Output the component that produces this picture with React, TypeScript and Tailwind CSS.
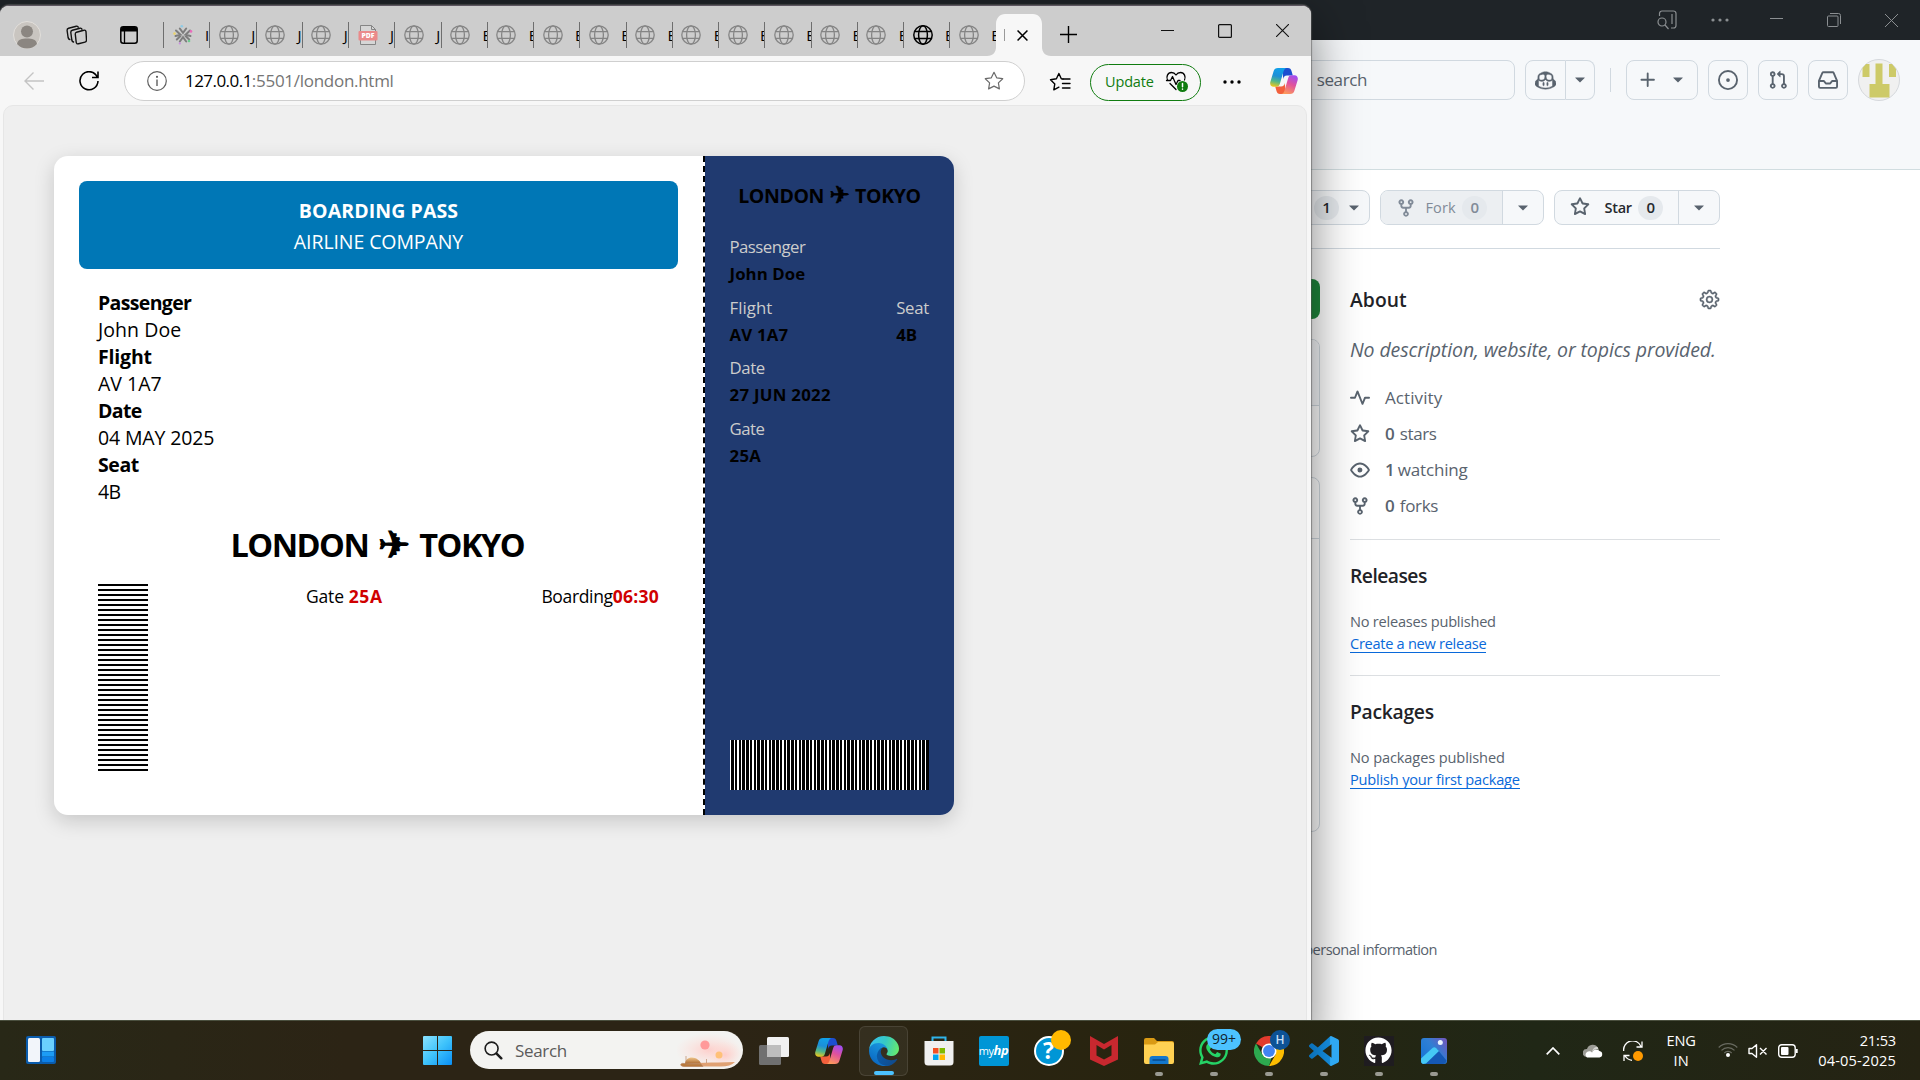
import React, { useLayoutEffect, useRef } from 'react';
import { GoCopilot, GoGear, GoTriangleDown } from 'react-icons/go';
import { FaGithub, FaWhatsapp } from 'react-icons/fa';

type Kids = { children?: React.ReactNode };

/* One line of text whose tracking is adjusted to fill a given width. */
function T({ w, className = '', children }: { w: number; className?: string; children: string }) {
  const ref = useRef<HTMLSpanElement>(null);
  useLayoutEffect(() => {
    const el = ref.current;
    if (!el) return;
    el.style.letterSpacing = '0px';
    const natural = el.getBoundingClientRect().width;
    el.style.letterSpacing = `${(w + 0.8 - natural) / children.length}px`;
  }, [w, children]);
  return <span ref={ref} className={`inline-block whitespace-pre ${className}`}>{children}</span>;
}

/* 16-unit outline icons */
const glyphs = {
  fork: 'M5 5.372v.878c0 .414.336.75.75.75h4.5a.75.75 0 0 0 .75-.75v-.878a2.25 2.25 0 1 1 1.5 0v.878a2.25 2.25 0 0 1-2.25 2.25h-1.5v2.128a2.251 2.251 0 1 1-1.5 0V8.5h-1.5A2.25 2.25 0 0 1 3.5 6.25v-.878a2.25 2.25 0 1 1 1.5 0ZM5 3.25a.75.75 0 1 0-1.5 0 .75.75 0 0 0 1.5 0Zm6.75.75a.75.75 0 1 0 0-1.5.75.75 0 0 0 0 1.5Zm-3 8.75a.75.75 0 1 0-1.5 0 .75.75 0 0 0 1.5 0Z',
  star: 'M8 .25a.75.75 0 0 1 .673.418l1.882 3.815 4.21.612a.75.75 0 0 1 .416 1.279l-3.046 2.97.719 4.192a.751.751 0 0 1-1.088.791L8 12.347l-3.766 1.98a.75.75 0 0 1-1.088-.79l.72-4.194L.818 6.374a.75.75 0 0 1 .416-1.28l4.21-.611L7.327.668A.75.75 0 0 1 8 .25Zm0 2.445L6.615 5.5a.75.75 0 0 1-.564.41l-3.097.45 2.24 2.184a.75.75 0 0 1 .216.664l-.528 3.084 2.769-1.456a.75.75 0 0 1 .698 0l2.77 1.456-.53-3.084a.75.75 0 0 1 .216-.664l2.24-2.183-3.096-.45a.75.75 0 0 1-.564-.41L8 2.694Z',
  eye: 'M8 2c1.981 0 3.671.992 4.933 2.078 1.27 1.091 2.187 2.345 2.637 3.023a1.62 1.62 0 0 1 0 1.798c-.45.678-1.367 1.932-2.637 3.023C11.67 13.008 9.981 14 8 14c-1.981 0-3.671-.992-4.933-2.078C1.797 10.83.88 9.576.43 8.898a1.62 1.62 0 0 1 0-1.798c.45-.677 1.367-1.931 2.637-3.022C4.33 2.992 6.019 2 8 2ZM1.679 7.932a.12.12 0 0 0 0 .136c.411.622 1.241 1.75 2.366 2.717C5.176 11.758 6.527 12.5 8 12.5c1.473 0 2.825-.742 3.955-1.715 1.124-.967 1.954-2.096 2.366-2.717a.12.12 0 0 0 0-.136c-.412-.621-1.242-1.75-2.366-2.717C10.824 4.242 9.473 3.5 8 3.5c-1.473 0-2.825.742-3.955 1.715-1.124.967-1.954 2.096-2.366 2.717ZM8 10a2 2 0 1 1-.001-3.999A2 2 0 0 1 8 10Z',
  pulse: 'M6 2c.306 0 .582.187.696.471L10 10.731l1.304-3.26A.751.751 0 0 1 12 7h3.25a.75.75 0 0 1 0 1.5h-2.742l-1.812 4.528a.751.751 0 0 1-1.392 0L6 4.77 4.696 8.03A.75.75 0 0 1 4 8.5H.75a.75.75 0 0 1 0-1.5h2.742l1.812-4.529A.751.751 0 0 1 6 2Z',
  issue: 'M8 9.5a1.5 1.5 0 1 0 0-3 1.5 1.5 0 0 0 0 3ZM8 0a8 8 0 1 1 0 16A8 8 0 0 1 8 0ZM1.5 8a6.5 6.5 0 1 0 13 0 6.5 6.5 0 0 0-13 0Z',
  pull: 'M1.5 3.25a2.25 2.25 0 1 1 3 2.122v5.256a2.251 2.251 0 1 1-1.5 0V5.372A2.25 2.25 0 0 1 1.5 3.25Zm5.677-.177L9.573.677A.25.25 0 0 1 10 .854V2.5h1A2.5 2.5 0 0 1 13.5 5v5.628a2.251 2.251 0 1 1-1.5 0V5a1 1 0 0 0-1-1h-1v1.646a.25.25 0 0 1-.427.177L7.177 3.427a.25.25 0 0 1 0-.354ZM3.75 2.5a.75.75 0 1 0 0 1.5.75.75 0 0 0 0-1.5Zm0 9.5a.75.75 0 1 0 0 1.5.75.75 0 0 0 0-1.5Zm8.25.75a.75.75 0 1 0 1.5 0 .75.75 0 0 0-1.5 0Z',
  inbox: 'M2.8 2.06A1.75 1.75 0 0 1 4.41 1h7.18c.7 0 1.333.417 1.61 1.06l2.74 6.395c.04.093.06.194.06.295v4.5A1.75 1.75 0 0 1 14.25 15H1.75A1.75 1.75 0 0 1 0 13.25v-4.5c0-.101.02-.202.06-.295Zm1.61.44a.25.25 0 0 0-.23.152L1.887 8H4.75a.75.75 0 0 1 .6.3L6.625 10h2.75l1.275-1.7a.75.75 0 0 1 .6-.3h2.863L11.82 2.652a.25.25 0 0 0-.23-.152Zm10.09 7h-2.875l-1.275 1.7a.75.75 0 0 1-.6.3h-3.5a.75.75 0 0 1-.6-.3L4.375 9.5H1.5v3.75c0 .138.112.25.25.25h12.5a.25.25 0 0 0 .25-.25Z',
  plus: 'M7.75 2a.75.75 0 0 1 .75.75V7h4.25a.75.75 0 0 1 0 1.5H8.5v4.25a.75.75 0 0 1-1.5 0V8.5H2.750a.75.75 0 0 1 0-1.5H7V2.750A.75.75 0 0 1 7.750 2Z',
};

function Glyph({ name, className = '' }: { name: keyof typeof glyphs; className?: string }) {
  return <svg viewBox="0 0 16 16" className={`size-5 shrink-0 ${className}`} fill="currentColor"><path d={glyphs[name]} /></svg>;
}

function Globe({ dark }: { dark?: boolean }) {
  return (
    <svg viewBox="0 0 20 20" className={`size-5 shrink-0 ${dark ? 'text-black' : 'text-[#858585]'}`} fill="none" stroke="currentColor" strokeWidth={dark ? 1.5 : 1.3}>
      <circle cx="10" cy="10" r="9.2" />
      <ellipse cx="10" cy="10" rx="4.4" ry="9.2" />
      <path d="M1.6 6.6h16.8M1.6 13.4h16.8" />
    </svg>
  );
}

function SlackLike() {
  return (
    <svg viewBox="0 0 20 20" className="size-5 shrink-0">
      <g stroke="#7d7d7d" strokeWidth="2" strokeLinecap="round" fill="none">
        <path d="M6.800 3.500L10 7.800l3.200-4.300M6.800 16.500l3.200-4.300 3.200 4.300M3 5.500l4.500 4.200L2.500 11M17 5.500l-4.500 4.200 5 1.300M3.800 14.500L7.500 11M16.200 14.500L12.500 11" />
      </g>
      <circle cx="8.8" cy="1.3" r="1.3" fill="#8ecbe6" />
      <circle cx="18" cy="6.4" r="1.3" fill="#ea6dbd" />
      <circle cx="1.5" cy="8.6" r="1.3" fill="#ead36d" />
      <circle cx="16" cy="16" r="1.3" fill="#6dc98e" />
      <circle cx="6.8" cy="18.4" r="1.1" fill="#c98ee0" />
    </svg>
  );
}

function Pdf() {
  return (
    <svg viewBox="0 0 20 20" className="size-5 shrink-0">
      <path d="M2.5.5h11l4 4v15h-15z" fill="#d6d6d6" stroke="#858585" />
      <path d="M13.500.5v4h4" fill="none" stroke="#858585" />
      <rect x="0.500" y="6" width="19" height="9.500" rx="1" fill="#ea8a8a" />
      <text x="10" y="13.300" textAnchor="middle" fontSize="6.800" fontWeight="800" fill="#fff" fontFamily="Open Sans">PDF</text>
    </svg>
  );
}

const tabs = [
  { k: 'slack', t: 'I' }, { k: 'g', t: 'J' }, { k: 'g', t: 'J' }, { k: 'g', t: 'J' }, { k: 'pdf', t: 'J' },
  { k: 'g', t: 'J' }, { k: 'g', t: 'E' }, { k: 'g', t: 'E' }, { k: 'g', t: 'E' }, { k: 'g', t: 'E' },
  { k: 'g', t: 'E' }, { k: 'g', t: 'E' }, { k: 'g', t: 'E' }, { k: 'g', t: 'E' }, { k: 'g', t: 'E' },
  { k: 'g', t: 'E' }, { k: 'dark', t: 'E' }, { k: 'g', t: 'E' },
];

function TabStrip() {
  return (
    <div className="flex h-[50px] shrink-0 bg-[#cdcdcd]">
      <svg viewBox="0 0 28 28" className="mt-[15px] ml-[13px] size-7 shrink-0">
        <circle cx="14" cy="14" r="13.500" fill="#c9c5c0" stroke="#e2dfdb" />
        <circle cx="14" cy="10.500" r="6" fill="#8b8681" />
        <path d="M4 23c1-5 5-5.500 10-5.500S23 18 24 23c-5 6-15 6-20 0z" fill="#8b8681" />
      </svg>
      <svg viewBox="0 0 22 22" className="mt-[18px] ml-[24px] size-[22px] shrink-0" fill="none" stroke="#111" strokeWidth="1.400" strokeLinejoin="round" strokeLinecap="round">
        <path d="M11.500 8.200l7.300-2c1-.3 2 .3 2.200 1.400l.5 8.500c0 1-.5 1.800-1.500 2l-6.500 1.700c-1.200.3-2.200-.4-2.300-1.500l-.9-8c-.1-1 .3-1.800 1.200-2.100z" />
        <path d="M8.500 18c-1-.3-1.500-1-1.700-2l-1-7.500c-.1-1.200.4-2 1.500-2.300l7.700-2c1-.2 1.700.1 2 1" />
        <path d="M4.800 15.500c-1-.3-1.500-1-1.700-2l-1-7c-.1-1.200.4-2 1.500-2.300l7.700-2c1-.2 1.700.1 2 1" />
      </svg>
      <svg viewBox="0 0 18 18" className="mt-5 ml-[33px] size-[18px] shrink-0">
        <rect x="0.800" y="0.800" width="16.400" height="16.400" rx="2.500" fill="none" stroke="#000" strokeWidth="1.500" />
        <path d="M1 3a2 2 0 0 1 2-2h12a2 2 0 0 1 2 2v2.500H1z" fill="#000" />
        <path d="M4.500 5v12" stroke="#000" strokeWidth="1.300" />
      </svg>
      <div className="ml-[25px] flex w-[833px] shrink-0 pt-4">
        {tabs.map((t, i) => (
          <div key={i} className="flex h-[26px] w-[46.250px] shrink-0 items-center overflow-hidden border-l border-[#6e6e6e] pl-[8.500px]">
            {t.k === 'slack' ? <SlackLike /> : t.k === 'pdf' ? <Pdf /> : <Globe dark={t.k === 'dark'} />}
            <span className="ml-[12.500px] text-[15px] leading-5 text-black">{t.t}</span>
          </div>
        ))}
      </div>
      <div className="relative flex h-[50px] w-[46px] shrink-0 items-center pt-2">
        <svg viewBox="0 0 64 42" className="absolute top-2 -left-[9px] h-[42px] w-16" fill="#f7f7f7">
          <path d="M0 42c6 0 9-4 9-9V10C9 4 13 0 18 0h28c5 0 9 4 9 10v23c0 5 3 9 9 9z" />
        </svg>
        <span className="relative ml-[8px] h-3 w-px bg-[#999]" />
        <svg viewBox="0 0 10 10" className="relative mt-px ml-3 size-[11px]" stroke="#000" strokeWidth="1.400"><path d="M.5.5l9 9M9.500.5l-9 9" /></svg>
      </div>
      <svg viewBox="0 0 17 17" className="mt-[20px] ml-[18px] size-[17px] shrink-0" stroke="#000" strokeWidth="1.400"><path d="M8.500 0v17M0 8.500h17" /></svg>
      <svg viewBox="0 0 13 13" className="mt-[18px] ml-[84px] size-[13px] shrink-0" stroke="#111" strokeWidth="1.200"><path d="M0 6.500h13" /></svg>
      <svg viewBox="0 0 14 14" className="mt-[18px] ml-[44px] size-[14px] shrink-0" fill="none" stroke="#111" strokeWidth="1.200"><rect x="0.600" y="0.600" width="12.800" height="12.800" rx="1" /></svg>
      <svg viewBox="0 0 13 13" className="mt-[18px] ml-[44px] size-[13px] shrink-0" stroke="#111" strokeWidth="1.100"><path d="M0 0l13 13M13 0L0 13" /></svg>
    </div>
  );
}

function CopilotLogo({ id }: { id: string }) {
  return (
    <svg viewBox="0 0 28 26" className="h-[26px] w-7 shrink-0">
      <defs>
        <linearGradient id={`${id}a`} x1="0.400" y1="0" x2="0.200" y2="1">
          <stop offset="0" stopColor="#11a0e8" /><stop offset="0.400" stopColor="#1c8fd8" /><stop offset="0.700" stopColor="#52b788" /><stop offset="1" stopColor="#f5c816" />
        </linearGradient>
        <linearGradient id={`${id}b`} x1="0.700" y1="0" x2="0.300" y2="1">
          <stop offset="0" stopColor="#a24df0" /><stop offset="0.450" stopColor="#e0529c" /><stop offset="1" stopColor="#fd9a5b" />
        </linearGradient>
      </defs>
      <path d="M13 0h5c2 0 3 1 3.500 3l1.300 4.500H17c-2.500 0-3.300 1.500-4 3.500z" fill="#1d4fd0" />
      <path d="M15 26h-5c-2 0-3-1-3.500-3l-1.300-4.500H11c2.500 0 3.300-1.500 4-3.500z" fill="#f2603c" />
      <path d="M8 0h8.500c-1.800.5-2.600 2-3 3.500L9.800 16c-.6 2-1.600 2.700-3.500 2.700H3.500C1 18.700-.3 16.500.3 14L3.600 3.300C4.300 1 5.600 0 8 0z" fill={`url(#${id}a)`} />
      <path d="M20 26h-8.500c1.800-.5 2.600-2 3-3.500L18.200 10c.6-2 1.600-2.700 3.500-2.700h2.800c2.500 0 3.800 2.200 3.200 4.700l-3.300 10.700C23.700 25 22.400 26 20 26z" fill={`url(#${id}b)`} />
    </svg>
  );
}

const starPath = 'M10 1.300l2.700 5.500 6 .9-4.300 4.200 1 6-5.400-2.800-5.400 2.800 1-6L1.300 7.700l6-.9z';

function AddressRow() {
  return (
    <div className="flex h-[49px] shrink-0 items-center">
      <svg viewBox="0 0 20 18" className="ml-6 h-[18px] w-5 shrink-0" fill="none" stroke="#c4c4c4" strokeWidth="1.400"><path d="M20 9H1M9.500.5L1 9l8.500 8.500" /></svg>
      <svg viewBox="0 0 20 20" className="ml-[35px] size-5 shrink-0" fill="none" stroke="#000" strokeWidth="1.600"><path d="M18.300 6.200A9 9 0 1 0 19 10M19 .5v6h-6" /></svg>
      <div className="ml-[25px] flex h-[40px] w-[901px] shrink-0 items-center rounded-full border border-[#cfcfcf] bg-white">
        <svg viewBox="0 0 20 20" className="ml-[21.500px] size-5" fill="none" stroke="#5f5f5f" strokeWidth="1.200">
          <circle cx="10" cy="10" r="9.300" /><path d="M10 8.500V15" strokeWidth="1.400" /><circle cx="10" cy="5.800" r="0.500" fill="#5f5f5f" />
        </svg>
        <span className="ml-[18.500px] flex text-[17px] leading-6">
          <T w={66} className="text-black">127.0.0.1</T>
          <T w={141} className="text-[#757575]">:5501/london.html</T>
        </span>
        <svg viewBox="0 0 20 20" className="mr-5 ml-auto size-5" fill="none" stroke="#6b6b6b" strokeWidth="1.200" strokeLinejoin="round"><path d={starPath} /></svg>
      </div>
      <svg viewBox="0 0 22 20" className="mt-0.5 ml-[24px] h-5 w-[22px] shrink-0" fill="none" stroke="#000" strokeWidth="1.400" strokeLinejoin="round" strokeLinecap="round">
        <path d="M14 7l-1.700-.2L9.900 1.500 7.400 6.800 1.500 7.700l4.300 4.200-1 6 5.100-2.700" /><path d="M14 7h7M13.500 11.500H21M13.500 16H21" />
      </svg>
      <div className="mt-[3px] ml-[19px] flex h-[37px] w-[111px] shrink-0 items-center rounded-full border-[1.500px] border-[#107c10] text-[#107c10]">
        <T w={48} className="ml-[14px] text-[14.500px] leading-5">Update</T>
        <svg viewBox="0 0 24 22" className="ml-[11px] h-[22px] w-6 shrink-0" fill="none" stroke="#000" strokeWidth="1.300" strokeLinejoin="round" strokeLinecap="round">
          <path d="M2.500 9C1 6 2.500 1.500 6.500 1.500c2 0 3.500 1 4.500 2.500 1-1.500 2.500-2.500 4.500-2.500C19.500 1.500 21 6 19.500 9M1.500 9.500h4l2-4 3.500 8 2-4h2M5 12.500l6 6" />
          <circle cx="17.500" cy="15.500" r="5.500" fill="#107c10" stroke="none" /><path d="M17.500 12.500v3.300M17.500 18v.2" stroke="#fff" strokeWidth="1.500" />
        </svg>
      </div>
      <svg viewBox="0 0 18 4" className="mt-0.5 ml-[22px] h-1 w-[18px] shrink-0"><circle cx="2" cy="2" r="1.700" /><circle cx="9" cy="2" r="1.700" /><circle cx="16" cy="2" r="1.700" /></svg>
      <div className="ml-[29px] flex"><CopilotLogo id="tb" /></div>
    </div>
  );
}

const fields = [
  ['Passenger', 92.500, 'John Doe', 82.500], ['Flight', 53, 'AV 1A7', 63], ['Date', 43, '04 MAY 2025', 115.500], ['Seat', 40, '4B', 21.500],
] as const;

function StubField({ l, lw, v, vw }: { l: string; lw: number; v: string; vw: number }) {
  return (
    <div className="flex flex-col items-start leading-[27px]">
      <T w={lw} className="text-[#ccc]">{l}</T>
      <T w={vw} className="font-bold text-black">{v}</T>
    </div>
  );
}

const bar = 'bg-[repeating-linear-gradient(90deg,#fff_0_1px,#000_1px_4px,#fff_4px_5px,#000_5px_7px,#fff_7px_9px,#000_9px_11px,#fff_11px_12px,#000_12px_15px)]';

function BoardingPass() {
  return (
    <div className="flex h-[659px] w-[900px] overflow-hidden rounded-[14px] bg-white text-black shadow-[0_6px_20px_rgba(0,0,0,0.17)]">
      <div className="flex w-[651px] shrink-0 flex-col border-r-2 border-dashed border-black p-[25px]">
        <div className="flex h-[88px] flex-col items-center rounded-lg bg-[#0077b6] pt-[14px] text-[19.500px] leading-[31px] text-white">
          <T w={158.500} className="font-bold">BOARDING PASS</T>
          <T w={168.500}>AIRLINE COMPANY</T>
        </div>
        <div className="flex flex-col items-start pt-5 pl-[19px] text-[19.500px] leading-[27px]">
          {fields.map(([l, lw, v, vw]) => (
            <React.Fragment key={l}>
              <T w={lw} className="font-bold">{l}</T>
              <T w={vw}>{v}</T>
            </React.Fragment>
          ))}
        </div>
        <div className="mt-[18px] ml-[151.500px] flex items-start text-[32.500px] leading-[44px] font-bold">
          <T w={137}>LONDON</T>
          <span className="flex w-[51px] justify-center font-['DejaVu_Sans'] text-[38px] font-normal [-webkit-text-stroke:1.300px_#000]">✈</span>
          <T w={104}>TOKYO</T>
        </div>
        <div className="mt-[17px] flex pr-[19px] pl-[19px] text-[17.500px] leading-6">
          <div className="h-[187px] w-[50px] bg-[repeating-linear-gradient(180deg,#000_0_2px,#fff_2px_5px)]" />
          <div className="ml-[158px] flex h-6 gap-[5px]"><T w={37}>Gate</T><T w={33} className="font-bold text-[#d00000]">25A</T></div>
          <div className="ml-auto flex h-6"><T w={70.500}>Boarding</T><T w={45.500} className="font-bold text-[#d00000]">06:30</T></div>
        </div>
      </div>
      <div className="flex flex-1 flex-col bg-[#203a70] p-[25px] text-[16.800px]">
        <div className="mt-px flex justify-center text-[19.500px] leading-[27px] font-bold">
          <T w={85}>LONDON</T>
          <span className="flex w-[31px] justify-center font-['DejaVu_Sans'] text-[24px] font-normal [-webkit-text-stroke:0.900px_#000]">✈</span>
          <T w={65}>TOKYO</T>
        </div>
        <div className="mt-[24px] -ml-[0.500px] flex flex-col gap-[6.700px]">
          <StubField l="Passenger" lw={75} v="John Doe" vw={75} />
          <div className="flex justify-between">
            <StubField l="Flight" lw={42} v="AV 1A7" vw={58} />
            <StubField l="Seat" lw={32} v="4B" vw={20} />
          </div>
          <StubField l="Date" lw={34.500} v="27 JUN 2022" vw={100.500} />
          <StubField l="Gate" lw={34} v="25A" vw={31} />
        </div>
        <div className={`mt-auto h-[50px] ${bar}`} />
      </div>
    </div>
  );
}

function BrowserWindow() {
  return (
    <div className="absolute top-[5px] left-0 flex h-[1040px] w-[1311px] flex-col overflow-hidden rounded-t-[9px] border-t border-[#5d5660] bg-[#f7f7f7] shadow-[0_14px_50px_rgba(0,0,0,0.5),0_0_1px_1px_rgba(110,110,110,0.55)]">
      <TabStrip />
      <AddressRow />
      <div className="mr-1 ml-[3px] flex-1 rounded-t-[10px] border border-[#e6e6e6] bg-[#efefef] pt-[50px] pl-[50px]">
        <BoardingPass />
      </div>
    </div>
  );
}

function Box({ className = '', children }: Kids & { className?: string }) {
  return <div className={`flex h-10 shrink-0 items-center justify-center rounded-lg border border-[#d1d9e0] text-[#59636e] ${className}`}>{children}</div>;
}

function Caret() {
  return <GoTriangleDown className="size-[18px] shrink-0" />;
}

function GithubHeader() {
  return (
    <div className="flex h-[130px] shrink-0 items-start justify-end border-b border-[#d1dde0] bg-[#f6f8fa] pt-5 pr-5">
      <div className="flex h-10 w-[400px] items-center justify-end gap-[5px] rounded-lg border border-[#d1d9e0] pr-[147px] text-[17px] text-[#59636e]">
        <T w={74}>Type / to</T><T w={49.500}>search</T>
      </div>
      <div className="ml-[10px] flex">
        <Box className="w-[41px] rounded-r-none"><GoCopilot className="size-[21px] stroke-current stroke-[0.500px]" /></Box>
        <Box className="w-[29px] rounded-l-none border-l-0"><Caret /></Box>
      </div>
      <div className="mt-2 ml-[15px] h-6 w-px bg-[#d1d9e0]" />
      <Box className="ml-[15px] w-[72px] gap-[11px]"><Glyph name="plus" /><Caret /></Box>
      <Box className="ml-[10px] w-10"><Glyph name="issue" /></Box>
      <Box className="ml-[10px] w-10"><Glyph name="pull" /></Box>
      <Box className="ml-[10px] w-10"><Glyph name="inbox" /></Box>
      <svg viewBox="0 0 42 42" className="-mt-px ml-[10px] size-[42px] shrink-0">
        <circle cx="21" cy="21" r="20.500" fill="#f0f0f0" stroke="#d5d8dc" />
        <g fill="#cdca68"><path d="M4.500 18V9L8 5h3.500v13zM17.500 4.500h7V25h7v13.500h-20V25h6zM31 5h3l4 5v8h-7z" /></g>
      </svg>
    </div>
  );
}

function Count({ n, className = '' }: { n: string; className?: string }) {
  return <span className={`flex h-6 w-[25px] shrink-0 items-center justify-center rounded-full bg-[#e5e9ed] text-[15px] ${className}`}>{n}</span>;
}

function RepoActions() {
  return (
    <div className="ml-[1200px] flex h-[59px] w-[520px] items-start justify-end border-b border-[#d1d9e0] text-[14.500px] font-semibold text-[#25292e]">
      <div className="flex h-[35px] w-[160px] items-center justify-end rounded-lg border border-[#d1d9e0] bg-[#f6f8fa] pr-1.5"><Count n="1" /><span className="ml-1.5 flex pt-px text-[#59636e]"><Caret /></span></div>
      <div className="ml-[10px] flex h-[35px] w-[164px] overflow-hidden rounded-lg border border-[#d1d9e0] bg-[#f6f8fa]">
        <div className="flex w-[122px] items-center border-r border-[#d1d9e0] bg-[#eceff2] pl-[15px] text-[#818b98]"><Glyph name="fork" /><T w={29.500} className="ml-[9.500px] font-medium">Fork</T><Count n="0" className="ml-[6.500px]" /></div>
        <div className="flex flex-1 items-center justify-center text-[#59636e]"><Caret /></div>
      </div>
      <div className="ml-[10px] flex h-[35px] w-[166px] overflow-hidden rounded-lg border border-[#d1d9e0] bg-[#f6f8fa]">
        <div className="flex w-[124px] items-center border-r border-[#d1d9e0] pl-[15px]"><Glyph name="star" className="mb-0.5 text-[#59636e]" /><T w={26.500} className="ml-[14.500px]">Star</T><Count n="0" className="ml-[6.500px]" /></div>
        <div className="flex flex-1 items-center justify-center text-[#59636e]"><Caret /></div>
      </div>
    </div>
  );
}

function Stat({ icon, n, text, w }: { icon: keyof typeof glyphs; n?: string; text: string; w: number }) {
  return (
    <div className="flex h-9 items-center text-[#59636e]">
      <Glyph name={icon} />
      <span className="ml-[15px] flex gap-[5px] text-[17px] leading-6">{n && <T w={n === '1' ? 7 : 9} className="font-semibold">{n}</T>}<T w={w}>{text}</T></span>
    </div>
  );
}

function Section({ title, tw, note, nw, link, lw }: { title: string; tw: number; note: string; nw: number; link: string; lw: number }) {
  return (
    <div className="flex h-[136px] flex-col items-start border-t border-[#dcdfe2] pt-[21px]">
      <T w={tw} className="text-[19.300px] leading-[30px] font-semibold text-[#1f2328]">{title}</T>
      <div className="mt-[19px] flex flex-col items-start text-[14.600px] leading-[22px]">
        <T w={nw} className="text-[#59636e]">{note}</T>
        <span className="h-[21px] border-b border-[#0969da]"><T w={lw} className="text-[#0969da]">{link}</T></span>
      </div>
    </div>
  );
}

function GithubWindow() {
  return (
    <div className="absolute inset-0 flex flex-col bg-white">
      <div className="flex h-10 shrink-0 items-center justify-end bg-[#1f2428] pr-[22px] text-[#8b8f92]">
        <svg viewBox="0 0 20 20" className="size-5" fill="none" stroke="currentColor" strokeWidth="1.200"><path d="M2.500 6V3.500a2.500 2.500 0 0 1 2.500-2.500h11.500A2.500 2.500 0 0 1 19 3.500v12a2.500 2.500 0 0 1-2.500 2.500H14M15 4v10" /><circle cx="5" cy="12" r="4" /><path d="M8 15l3.500 4" /></svg>
        <svg viewBox="0 0 18 4" className="ml-[34px] h-1 w-[18px]" fill="currentColor"><circle cx="2" cy="2" r="1.600" /><circle cx="9" cy="2" r="1.600" /><circle cx="16" cy="2" r="1.600" /></svg>
        <svg viewBox="0 0 13 13" className="mb-[3px] ml-[41px] size-[13px]" stroke="currentColor"><path d="M0 6.500h13" /></svg>
        <svg viewBox="0 0 14 14" className="ml-11 size-[14px]" fill="none" stroke="currentColor"><rect x="0.500" y="3" width="10.500" height="10.500" rx="1" /><path d="M3 .5h8.500a2 2 0 0 1 2 2V11" /></svg>
        <svg viewBox="0 0 13 13" className="ml-11 size-[13px]" stroke="currentColor"><path d="M0 0l13 13M13 0L0 13" /></svg>
      </div>
      <GithubHeader />
      <div className="flex flex-col pt-5">
        <RepoActions />
        <div className="flex">
          <div className="flex w-[1320px] flex-col pt-[30px] pl-[900px]">
            <div className="h-10 rounded-lg bg-[#1f883d]" />
            <div className="mt-5 h-[118px] overflow-hidden rounded-lg border border-[#d1d9e0]"><div className="h-[66px] border-b border-[#d1d9e0] bg-[#f6f8fa]" /></div>
            <div className="mt-5 h-[355px] overflow-hidden rounded-lg border border-[#d1d9e0]"><div className="h-[61px] border-b border-[#d1d9e0]" /></div>
          </div>
          <div className="ml-[30px] flex w-[370px] flex-col pt-9">
            <div className="flex items-center justify-between leading-[30px]"><T w={56} className="text-[19.300px] font-semibold text-[#1f2328]">About</T><GoGear className="mb-0.5 size-[21px] stroke-current stroke-[0.500px] text-[#59636e]" /></div>
            <T w={365} className="mt-5 self-start text-[19.500px] leading-[30px] text-[#59636e] italic">No description, website, or topics provided.</T>
            <div className="mt-[15px] flex h-[159px] flex-col">
              <Stat icon="pulse" text="Activity" w={56.500} />
              <Stat icon="star" n="0" text="stars" w={36} />
              <Stat icon="eye" n="1" text="watching" w={69} />
              <Stat icon="fork" n="0" text="forks" w={37.500} />
            </div>
            <Section title="Releases" tw={76} note="No releases published" nw={145} link="Create a new release" lw={135.500} />
            <Section title="Packages" tw={83} note="No packages published" nw={154} link="Publish your first package" lw={169} />
          </div>
        </div>
        <div className="mt-[106px] flex w-[1437px] justify-end gap-1 text-[14.600px] leading-[22px] text-[#59636e]"><T w={112}>Do not share my</T><T w={132}>personal information</T></div>
      </div>
    </div>
  );
}

function Slot({ running, active, children }: Kids & { running?: boolean; active?: boolean }) {
  return (
    <div className="flex h-[60px] w-[55px] shrink-0 items-center justify-center">
      <div className={`relative mb-px flex h-[50px] w-[49px] items-center justify-center rounded-md ${active ? 'border border-white/10 bg-white/5' : ''}`}>
        {children}
        {active && <span className="absolute bottom-0 h-1 w-5 rounded-full bg-[#4cc2ff]" />}
        {running && <span className="absolute bottom-0 h-1 w-2 rounded-full bg-[#9a9a92]" />}
      </div>
    </div>
  );
}

function EdgeLogo() {
  return (
    <svg viewBox="0 0 256 256" className="size-[30px]">
      <defs>
        <linearGradient id="ea" x1="0.200" y1="0.300" x2="1" y2="0.700"><stop offset="0" stopColor="#0c59a4" /><stop offset="1" stopColor="#114a8b" /></linearGradient>
        <linearGradient id="eb" x1="0.800" y1="0" x2="0.300" y2="1"><stop offset="0" stopColor="#1b9de2" /><stop offset="1" stopColor="#0a65c0" /></linearGradient>
        <linearGradient id="ec" x1="0" y1="0.400" x2="1" y2="0.600"><stop offset="0" stopColor="#35c1f1" /><stop offset="0.500" stopColor="#36c9c4" /><stop offset="1" stopColor="#66eb6e" /></linearGradient>
      </defs>
      <path fill="url(#ea)" d="M235.700 195.500c-3.400 1.800-7 3.400-10.600 4.700a102.900 102.900 0 0 1-36.100 6.500c-47.500 0-88.900-32.700-88.900-74.700a31.900 31.900 0 0 1 16.600-27.800c-43 1.800-54 46.600-54 72.800 0 74.200 68.300 81.600 83 81.600 8 0 20-2.300 27.200-4.600l1.300-.4a128.300 128.300 0 0 0 66.600-52.800 4 4 0 0 0-5.100-5.300z" />
      <path fill="url(#eb)" d="M105.700 241.400a79.200 79.200 0 0 1-22.700-21.300 80.700 80.700 0 0 1 29.500-120c3.100-1.500 8.500-4.100 15.600-4a32.400 32.400 0 0 1 25.700 13 31.900 31.900 0 0 1 6.400 18.700c0-.2 24.500-79.600-80-79.600-43.900 0-80 41.600-80 78.100a130.200 130.200 0 0 0 12.100 56 128 128 0 0 0 156.400 67 75.500 75.500 0 0 1-63-8z" />
      <path fill="url(#ec)" d="M152.300 148.900c-.8 1-3.300 2.500-3.300 5.700 0 2.600 1.700 5.100 4.700 7.200 14.400 10 41.500 8.700 41.600 8.700a59.600 59.600 0 0 0 30.300-8.400 61.400 61.400 0 0 0 30.400-52.900c.3-22.400-8-37.300-11.400-43.900C223.500 23.300 177.700 0 128 0A128 128 0 0 0 0 126.200c.5-36.500 36.800-66 80-66 3.500 0 23.500.3 42 10a72.600 72.600 0 0 1 30.900 29.300c6.100 10.600 7.200 24 7.200 29.400s-2.700 13.200-7.800 20z" />
    </svg>
  );
}

function Taskbar() {
  return (
    <div className="absolute inset-x-0 bottom-0 flex h-[60px] border-t border-[#4a4f3e] bg-[linear-gradient(90deg,#282817_0%,#2c2415_18%,#2c2415_38%,#28240f_60%,#202716_80%,#252313_100%)] text-white">
      <svg viewBox="0 0 30 28" className="mt-[15px] ml-[26px] h-7 w-[30px] shrink-0">
        <rect width="30" height="28" rx="2" fill="#0a5cad" /><rect x="2" y="2" width="12" height="24" rx="1.500" fill="#f2f5fa" /><rect x="16" y="2" width="12" height="13" rx="1" fill="#6ad0ff" /><rect x="16" y="15.500" width="12" height="5" fill="#1c9cf5" /><rect x="16" y="21" width="12" height="5" rx="1" fill="#0c7fe6" />
      </svg>
      <svg viewBox="0 0 29 29" className="mt-[15px] ml-[367px] size-[29px] shrink-0">
        <defs><linearGradient id="win" x1="0" y1="0" x2="1" y2="1"><stop offset="0" stopColor="#8be2ff" /><stop offset="0.500" stopColor="#3fc3fb" /><stop offset="1" stopColor="#0a8ff5" /></linearGradient></defs>
        <path fill="url(#win)" d="M1 0h13v14H0V1a1 1 0 0 1 1-1zM15 0h13a1 1 0 0 1 1 1v13H15zM0 15h14v14H1a1 1 0 0 1-1-1zM15 15h14v13a1 1 0 0 1-1 1H15z" />
      </svg>
      <div className="mt-[10px] ml-[18px] flex h-[38px] w-[273px] shrink-0 items-center overflow-hidden rounded-full bg-[#f3f3f1]">
        <svg viewBox="0 0 20 20" className="ml-[14px] size-[19px] shrink-0" fill="none" stroke="#1c1c1c" strokeLinecap="round"><circle cx="8" cy="8" r="6.800" strokeWidth="1.700" /><path d="M13.200 13.200l5 5" strokeWidth="2.600" /></svg>
        <T w={51} className="mt-0.5 ml-[12px] text-[17px] leading-6 text-[#5b5b5b]">Search</T>
        <svg viewBox="0 0 66 38" className="ml-auto h-[38px] w-[66px] shrink-0">
          <defs>
            <radialGradient id="pk"><stop offset="0" stopColor="#ffc9c5" stopOpacity="0.850" /><stop offset="1" stopColor="#ffdcd6" stopOpacity="0" /></radialGradient>
            <linearGradient id="sn" x1="0" y1="0" x2="0" y2="1"><stop offset="0" stopColor="#f0c58a" /><stop offset="1" stopColor="#a8672e" /></linearGradient>
          </defs>
          <ellipse cx="32" cy="19" rx="34" ry="17" fill="url(#pk)" /><ellipse cx="48" cy="24" rx="18" ry="14" fill="url(#pk)" />
          <circle cx="28" cy="14" r="4.600" fill="#ff9a9a" /><circle cx="42" cy="24" r="3.500" fill="#ffc179" />
          <path d="M4 34c14-3 30-2 54-3-3 3-8 4.500-14 4.500H8c-2 0-4-.5-4-1.500z" fill="#e0a173" />
          <path d="M8 33c0-4 3-6.500 7-6.500s8 3 9 6z" fill="url(#sn)" /><path d="M4 33c2-1.500 4 0 6 0h14l2 2.500H8c-3 0-5-1-4-2.500zM9 31V25M29.500 32v-4" fill="#b97a3b" stroke="#b98a6a" strokeWidth="0.700" />
        </svg>
      </div>
      <div className="ml-[3px] flex">
        <Slot><svg viewBox="0 0 30 28" className="h-7 w-[30px]"><rect y="8" width="22" height="20" rx="1.500" fill="#707070" /><rect x="8" width="22" height="20" rx="1.500" fill="#f1f1f1" /><rect x="8" y="8" width="14" height="12" fill="#bdbdbd" /></svg></Slot>
        <Slot><CopilotLogo id="tk" /></Slot>
        <Slot active><EdgeLogo /></Slot>
        <Slot><svg viewBox="0 0 30 30" className="size-[30px]"><path d="M8.500 6V1.500h13V6" fill="none" stroke="#2fb4ea" strokeWidth="2" /><path d="M.5 5h29v21a3.500 3.500 0 0 1-3.500 3.500H4A3.500 3.500 0 0 1 .5 26z" fill="#f0f0f0" /><path fill="#f25022" d="M9 12h5.500v5.500H9z" /><path fill="#7fba00" d="M15.500 12H21v5.500h-5.500z" /><path fill="#00a4ef" d="M9 18.500h5.500V24H9z" /><path fill="#ffb900" d="M15.500 18.500H21V24h-5.500z" /></svg></Slot>
        <Slot><div className="flex size-[30px] items-center justify-center rounded-[2px] bg-[#0096d6] text-[11px] leading-none tracking-[-0.500px]"><span>my</span><span className="text-[13px] font-bold italic">hp</span></div></Slot>
        <Slot>
          <div className="flex size-[30px] items-center justify-center rounded-full border-2 border-white bg-[#0096d6] text-[23px] leading-none font-bold">?</div>
          <span className="absolute top-1 right-0.5 size-5 rounded-full bg-[#ffb900]" />
        </Slot>
        <Slot><svg viewBox="0 0 28 30" className="h-[30px] w-7" fill="#c8282f"><path d="M0 0l14 8L28 0v23.500L14 30 0 23.500zM6.500 9v10.500L14 23.500l7.500-4V9L14 13.500z" /></svg></Slot>
        <Slot running><svg viewBox="0 0 30 28" className="h-7 w-[30px]"><path d="M0 3a2 2 0 0 1 2-2h8l3 3h15a2 2 0 0 1 2 2v6H0z" fill="#d99a15" /><path d="M0 7.500h11L14 5h14a2 2 0 0 1 2 2v18a2 2 0 0 1-2 2H2a2 2 0 0 1-2-2z" fill="#ffd153" /><path d="M5.500 27v-5a3 3 0 0 1 3-3h13a3 3 0 0 1 3 3v5z" fill="#1377cc" /><path d="M8.500 23h13" stroke="#0a4d91" strokeWidth="1.600" /></svg></Slot>
        <Slot running>
          <FaWhatsapp className="size-[33px] text-[#25d366]" />
          <span className="absolute top-[3px] -right-[3px] flex h-[21px] w-[34px] items-center justify-center rounded-full bg-[#4cc2ff] text-[14px] leading-none text-[#10222c]">99+</span>
        </Slot>
        <Slot running>
          <svg viewBox="0 0 48 48" className="size-[30px]"><path fill="#e33b2e" d="M24 24L3.200 12A24 24 0 0 1 44.800 12z" /><path fill="#fdbd00" d="M44.800 12A24 24 0 0 1 24 48l10.400-18L36 18 24 12z" /><path fill="#2da94f" d="M3.200 12l10.400 18A12 12 0 0 0 28 35L24 48A24 24 0 0 1 3.200 12z" /><circle cx="24" cy="24" r="12" fill="#fff" /><circle cx="24" cy="24" r="9.500" fill="#4284f3" /></svg>
          <span className="absolute top-1 right-[3px] flex size-5 items-center justify-center rounded-full bg-[#0d5296] text-[12px] leading-none font-semibold text-[#c8dff5]">H</span>
        </Slot>
        <Slot running>
          <svg viewBox="0 0 24 24" className="size-[30px]"><defs><linearGradient id="vs" x1="0" y1="0" x2="1" y2="0"><stop offset="0" stopColor="#0a6fb8" /><stop offset="0.680" stopColor="#1487d4" /><stop offset="0.720" stopColor="#2fa8f2" /><stop offset="1" stopColor="#2fa8f2" /></linearGradient></defs>
            <path fill="url(#vs)" d="M23.150 2.587L18.210.21a1.494 1.494 0 0 0-1.705.29l-9.460 8.630-4.120-3.128a.999.999 0 0 0-1.276.057L.327 7.261A1 1 0 0 0 .326 8.740L3.899 12 .326 15.260a1 1 0 0 0 .001 1.479L1.650 17.940a.999.999 0 0 0 1.276.057l4.120-3.128 9.460 8.630a1.492 1.492 0 0 0 1.704.290l4.942-2.377A1.500 1.500 0 0 0 24 20.060V3.939a1.500 1.500 0 0 0-.850-1.352zm-5.146 14.861L10.826 12l7.178-5.448v10.896z" /></svg>
        </Slot>
        <Slot running><div className="flex size-[30px] items-center justify-center bg-[#1f1c20]"><FaGithub className="size-[27px]" /></div></Slot>
        <Slot running>
          <svg viewBox="0 0 26 26" className="size-[26px]"><defs><linearGradient id="ph" x1="0" y1="1" x2="1" y2="0.200"><stop offset="0" stopColor="#1273d6" /><stop offset="0.600" stopColor="#2f7fd4" /><stop offset="1" stopColor="#6a5cc0" /></linearGradient></defs>
            <rect width="26" height="26" rx="3" fill="url(#ph)" /><path d="M1 23.500L16 11l9.500 11.500c-.3 2-1.500 3.500-3.500 3.500H4c-2 0-3-1-3-2.500z" fill="#1558b5" /><path d="M0 20.500L11.500 10a2.500 2.500 0 0 1 3.500 0l3 3L5 25.500l-3 .4a3 3 0 0 1-2-2.900z" fill="#45c8f5" /><circle cx="19.300" cy="4.500" r="2.500" fill="#e8f4ff" /></svg>
        </Slot>
      </div>
      <div className="mr-6 ml-auto flex items-center text-[14.600px] leading-5">
        <svg viewBox="0 0 14 8" className="h-2 w-[14px]" fill="none" stroke="#fff" strokeWidth="1.700"><path d="M.7 7.300L7 1l6.300 6.300" /></svg>
        <svg viewBox="0 0 20 14" className="ml-[23px] h-[14px] w-5"><path d="M3.500 13A4 4 0 0 1 4 5a6 6 0 0 1 11-1L9 9z" fill="#9c9c96" /><path d="M4 13.500a3.300 3.300 0 0 1 0-5.500c2-1.200 4-.5 5 .5 1.500-3.500 6-4 7.500-1.500a3.300 3.300 0 0 1 0 6.500z" fill="#fff" /><path d="M9 8.500c1.500-3.500 5-4.300 7-2.500l-1.500-3C11 3 9.500 5 9 8.500z" fill="#d5d5d1" /></svg>
        <svg viewBox="0 0 20 20" className="ml-5 size-5" fill="none" stroke="#fff" strokeWidth="1.300"><path d="M.7 10A9 9 0 0 1 18 5.500M19 .5V6h-5.500M6.500 14.500H1V20M1.800 14.500C3.500 17.500 6 19 9 19.300" /><circle cx="15" cy="15" r="5" fill="#ff9a00" stroke="none" /></svg>
        <div className="mb-px ml-[23px] flex w-[30px] flex-col items-center"><T w={28.500}>ENG</T><T w={14.500}>IN</T></div>
        <svg viewBox="0 0 20 15" className="mb-0.5 ml-[22px] h-[15px] w-5 shrink-0" fill="none" stroke="#686a60" strokeWidth="1.200"><path d="M.7 5.500a13 13 0 0 1 18.600 0M3.500 8.300a9.200 9.200 0 0 1 13 0M6.300 11a5.200 5.200 0 0 1 7.400 0" /><circle cx="10" cy="13" r="2" fill="#fff" stroke="none" /></svg>
        <svg viewBox="0 0 20 14" className="ml-[10px] h-[14px] w-5 shrink-0" fill="none" stroke="#fff" strokeWidth="1.400" strokeLinejoin="round"><path d="M1 4.500h3L8.500.8v12.400L4 9.500H1zM12 4l6.500 6.500M18.500 4L12 10.500" /></svg>
        <svg viewBox="0 0 20 14" className="ml-[10px] h-[14px] w-5 shrink-0" fill="none" stroke="#fff" strokeWidth="1.400"><rect x="0.700" y="0.700" width="16.500" height="12.600" rx="3" /><rect x="3" y="3" width="7.500" height="8" rx="1" fill="#fff" stroke="none" /><path d="M18.800 5v4" strokeWidth="1.800" /></svg>
        <div className="mb-px ml-[20px] flex flex-col items-end"><T w={35.500}>21:53</T><T w={77}>04-05-2025</T></div>
      </div>
    </div>
  );
}

export default function App() {
  return (
    <div className="relative h-[1080px] w-[1920px] overflow-hidden bg-white font-['Open_Sans','Noto_Sans',sans-serif]">
      <GithubWindow />
      <BrowserWindow />
      <Taskbar />
    </div>
  );
}
